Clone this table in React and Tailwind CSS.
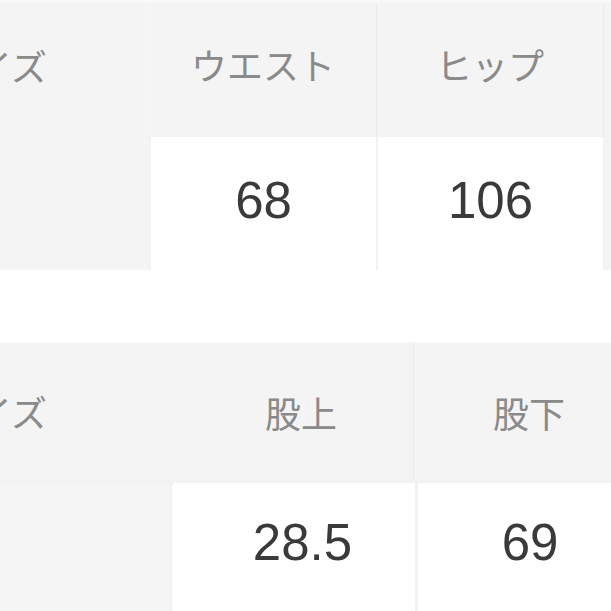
import React from 'react';

const JP = { fontFamily: '"Noto Sans CJK JP", "Noto Sans", sans-serif' };
const NUM = { fontFamily: '"Liberation Sans", Arial, sans-serif' };

function HeadCell({ label, className = '' }) {
  return (
    <div className={`flex items-center justify-center text-[36px] text-[#8a8a8a] ${className}`} style={JP}>
      {label}
    </div>
  );
}

function ValueCell({ value, className = '' }) {
  return (
    <div className={`flex items-center justify-center bg-white text-[51px] text-[#3a3a3a] ${className}`} style={NUM}>
      {value}
    </div>
  );
}

export default function App() {
  return (
    <div className="w-[611px] h-[611px] overflow-hidden bg-white">
      {/* top table */}
      <div className="flex h-[136px] bg-[#f4f4f4] border-t-[3px] border-[#f8f8f8]">
        <div className="w-[150px] shrink-0 flex items-center overflow-hidden pb-[10px] border-r border-[#f7f7f7]">
          <span className="-ml-[60px] text-[36px] text-[#8a8a8a] whitespace-nowrap" style={JP}>サイズ</span>
        </div>
        <HeadCell label="ウエスト" className="w-[227px] shrink-0 pb-[12px] border-r border-[#ebebeb]" />
        <HeadCell label="ヒップ" className="w-[227px] shrink-0 pb-[12px] border-r border-[#ebebeb]" />
        <div className="flex-1" />
      </div>
      <div className="flex h-[134px] bg-[#f2f2f2] gap-[2px] pt-[1px]">
        <div className="w-[149px] shrink-0 bg-[#f4f4f4]" />
        <ValueCell value="68" className="w-[225px] shrink-0 pb-[4px]" />
        <ValueCell value="106" className="w-[225px] shrink-0 pb-[4px]" />
        <div className="flex-1 bg-[#f4f4f4]" />
      </div>

      <div className="h-[72px]" />

      {/* bottom table */}
      <div className="flex h-[138px] bg-[#f4f4f4] border-t border-[#f7f7f7]">
        <div className="w-[171px] shrink-0 flex items-center overflow-hidden pb-[2px]">
          <span className="-ml-[60px] text-[36px] text-[#8a8a8a] whitespace-nowrap" style={JP}>サイズ</span>
        </div>
        <HeadCell label="股上" className="w-[243px] shrink-0 pl-[18px] border-r border-[#ebebeb]" />
        <HeadCell label="股下" className="w-[236px] shrink-0 pr-[6px]" />
      </div>
      <div className="flex h-[131px] bg-[#f2f2f2] gap-[3px] pt-[3px]">
        <div className="w-[169px] shrink-0 bg-[#f5f5f5]" />
        <ValueCell value="28.5" className="w-[243px] shrink-0 pl-[18px] rounded-tl-[4px] pb-[8px]" />
        <ValueCell value="69" className="w-[236px] shrink-0 pr-[12px] pb-[8px]" />
      </div>
    </div>
  );
}
